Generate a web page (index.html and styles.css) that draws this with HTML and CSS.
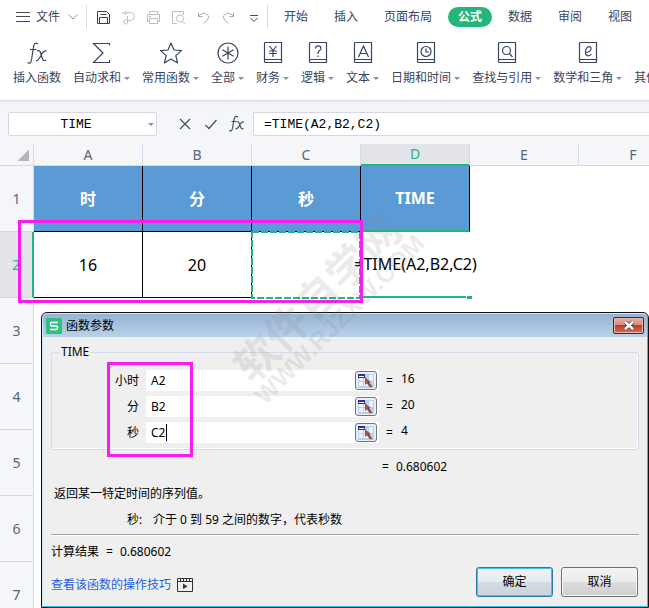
FILE: index.html
```html
<!DOCTYPE html>
<html lang="zh-CN">
<head>
<meta charset="UTF-8">
<meta name="viewport" content="width=device-width, initial-scale=1.0">
<title>TIME 函数</title>
<link rel="stylesheet" href="styles.css">
</head>
<body>
    <header class="ribbon">
        <nav class="menu">
            <button class="file-btn">
                <svg width="14" height="12" viewBox="0 0 14 12"><path d="M0 1.5h14M0 5.5h14M0 10.5h14" stroke="#444a58"/></svg>
                <span>文件</span>
                <svg class="file-arrow" width="10" height="6" viewBox="0 0 10 6"><path d="M.5.5L5 5 9.500.5" fill="none" stroke="#8a8f9a"/></svg>
            </button>
            <div class="quick">
                <button aria-label="保存"><svg width="15" height="15" viewBox="0 0 15 15"><path d="M1.500 1.500h9l3 3v9h-12zM3.500 13.500v-6h8v6M4.500 4.500h6" fill="none" stroke="#3b3f4a"/></svg></button>
                <button aria-label="输出"><svg width="15" height="15" viewBox="0 0 15 15"><path d="M1 3h5M4 1l2 2-2 2M6 2.500h3.500a4 4 0 010 8H6M6.500 6v6a2 2 0 11-2-2h2" fill="none" stroke="#bcbec4"/></svg></button>
                <button aria-label="打印"><svg width="15" height="15" viewBox="0 0 15 15"><path d="M3.500 4V1.500h8V4M3.500 11.500h-2v-7h12v7h-2M3.500 8.500h8v5h-8zM3 6.500h2" fill="none" stroke="#bcbec4"/></svg></button>
                <button aria-label="打印预览"><svg width="15" height="15" viewBox="0 0 15 15"><path d="M6 13.500H1.500v-12h11V5M11.500 11.500l3 2.500" fill="none" stroke="#bcbec4"/><circle cx="9" cy="8.500" r="3.500" fill="none" stroke="#bcbec4"/></svg></button>
                <button aria-label="撤销"><svg width="15" height="15" viewBox="0 0 15 15"><path d="M2.500 2.500v4h4M2.500 6.500C6 1.500 12 3 12.500 7c0 3-3 4-5 6.500" fill="none" stroke="#a9abb2"/></svg></button>
                <button aria-label="恢复"><svg width="15" height="15" viewBox="0 0 15 15"><path d="M12.500 2.500v4h-4M12.500 6.500C9 1.500 3 3 2.500 7c0 3 3 4 5 6.500" fill="none" stroke="#a9abb2"/></svg></button>
                <button aria-label="更多"><svg width="15" height="15" viewBox="0 0 15 15"><path d="M4 5.500h8M4.500 8L8 11.500 11.500 8" fill="none" stroke="#444a58"/></svg></button>
            </div>
            <div class="tabs">
                <button>开始</button>
                <button>插入</button>
                <button>页面布局</button>
                <button class="active">公式</button>
                <button>数据</button>
                <button>审阅</button>
                <button>视图</button>
            </div>
        </nav>
        <div class="tools">
            <button class="tool">
                <svg width="24" height="24" viewBox="0 0 24 24"><path d="M13 3c-3-2-4 0-4.500 3L6.500 19c-.4 3-2 4-4 2.500M5 8.500h6.500M12 10c3-1.500 3.500 1 4.500 5s2 5.500 4.500 4M21.500 10c-3-1-4 2-5.500 4.500S13 20.500 11 19.500" fill="none" stroke="#39445e" stroke-width="1.200"/></svg>
                <span>插入函数</span>
            </button>
            <button class="tool">
                <svg width="24" height="24" viewBox="0 0 24 24"><path d="M19.500 4.500V2.500H3.500L13 12 3.500 21.500h16v-2.500" fill="none" stroke="#39445e" stroke-width="1.200"/></svg>
                <span class="drop">自动求和</span>
            </button>
            <button class="tool">
                <svg width="24" height="24" viewBox="0 0 24 24"><path d="M12 2l3 7 7.500.6-5.700 5 1.800 7.400-6.600-4-6.600 4 1.800-7.400-5.700-5L9 9z" fill="none" stroke="#39445e" stroke-width="1.200" stroke-linejoin="round"/></svg>
                <span class="drop">常用函数</span>
            </button>
            <button class="tool">
                <svg width="24" height="24" viewBox="0 0 24 24"><circle cx="12" cy="12" r="10" fill="none" stroke="#39445e" stroke-width="1.200"/><path d="M12 5.500v13M6.400 8.700l11.200 6.600M17.600 8.700L6.400 15.300" stroke="#39445e" stroke-width="1.200"/></svg>
                <span class="drop">全部</span>
            </button>
            <button class="tool">
                <svg width="24" height="24" viewBox="0 0 24 24"><path d="M4.500 1.500h16v20h-16a1 1 0 01-1-1v-18a1 1 0 011-1zM4 18.500h16.500M8.500 5l3.500 4.500L15.500 5M12 9.500V16M8 10h8M8 12.500h8" fill="none" stroke="#39445e" stroke-width="1.200"/></svg>
                <span class="drop">财务</span>
            </button>
            <button class="tool">
                <svg width="24" height="24" viewBox="0 0 24 24"><path d="M4.500 1.500h16v20h-16a1 1 0 01-1-1v-18a1 1 0 011-1zM4 18.500h16.500M9.500 7.500C9.500 4 15 4 15 7.500c0 2-3 2-3 4.500v1M12 14.500V16" fill="none" stroke="#39445e" stroke-width="1.200"/></svg>
                <span class="drop">逻辑</span>
            </button>
            <button class="tool">
                <svg width="24" height="24" viewBox="0 0 24 24"><path d="M4.500 1.500h16v20h-16a1 1 0 01-1-1v-18a1 1 0 011-1zM4 18.500h16.500M7.500 16L12.500 5l5 11M9.500 12.500h6" fill="none" stroke="#39445e" stroke-width="1.200"/></svg>
                <span class="drop">文本</span>
            </button>
            <button class="tool">
                <svg width="24" height="24" viewBox="0 0 24 24"><path d="M4.500 1.500h16v20h-16a1 1 0 01-1-1v-18a1 1 0 011-1zM4 18.500h16.500M12 7.500v3.500h3" fill="none" stroke="#39445e" stroke-width="1.200"/><circle cx="12" cy="10.500" r="5" fill="none" stroke="#39445e" stroke-width="1.200"/></svg>
                <span class="drop">日期和时间</span>
            </button>
            <button class="tool">
                <svg width="24" height="24" viewBox="0 0 24 24"><path d="M4.500 1.500h16v20h-16a1 1 0 01-1-1v-18a1 1 0 011-1zM4 18.500h16.500M14.500 12.500l3 3.500" fill="none" stroke="#39445e" stroke-width="1.200"/><circle cx="11.500" cy="9.500" r="4" fill="none" stroke="#39445e" stroke-width="1.200"/></svg>
                <span class="drop">查找与引用</span>
            </button>
            <button class="tool">
                <svg width="24" height="24" viewBox="0 0 24 24"><path d="M4.500 1.500h16v20h-16a1 1 0 01-1-1v-18a1 1 0 011-1zM4 18.500h16.500M9 11.500c4 0 6.500-2 6-4.500-.6-2.500-5-1.500-5.500 3-.5 6 4 5.500 6 3" fill="none" stroke="#39445e" stroke-width="1.200"/></svg>
                <span class="drop">数学和三角</span>
            </button>
            <button class="tool">
                <svg width="24" height="24" viewBox="0 0 24 24"></svg>
                <span class="drop">其他函数</span>
            </button>
        </div>
    </header>

    <div class="formula-bar">
        <div class="name-box">
            <input type="text" value="TIME" aria-label="名称框">
            <button class="name-arrow" aria-label="展开"></button>
        </div>
        <div class="formula-btns">
            <button aria-label="取消输入"><svg width="12" height="12" viewBox="0 0 12 12"><path d="M1 1l10 10M11 1L1 11" stroke="#444f66" stroke-width="1.200"/></svg></button>
            <button aria-label="输入"><svg width="12" height="12" viewBox="0 0 12 12"><path d="M.5 7L4 10.500 11.500 2" fill="none" stroke="#444f66" stroke-width="1.200"/></svg></button>
            <button aria-label="插入函数"><svg width="17" height="18" viewBox="0 0 17 18"><path d="M9 2c-2.500-1.500-3.500 0-4 2.500L3.500 13c-.3 3-1.500 3.500-3.500 2.500M2.500 6.500h5M7.500 7c2.500-1 2.500 1 3.500 3.500s1.500 4 3.500 3M15 7c-2.500-1-3.500 2-4.500 3.500S8 14.500 6.500 13.500" fill="none" stroke="#444f66" stroke-width="1.200"/></svg></button>
        </div>
        <input class="formula-input" type="text" value="=TIME(A2,B2,C2)" aria-label="编辑栏">
    </div>

    <main class="sheet">
        <table class="grid">
            <colgroup><col class="col-num"><col><col><col><col><col><col></colgroup>
            <thead>
                <tr>
                    <th class="corner"></th><th>A</th><th>B</th><th>C</th><th class="selected">D</th><th>E</th><th>F</th>
                </tr>
            </thead>
            <tbody>
                <tr>
                    <th>1</th>
                    <td class="title">时</td><td class="title">分</td><td class="title">秒</td><td class="title title-last">TIME</td><td></td><td></td>
                </tr>
                <tr>
                    <th class="selected">2</th>
                    <td class="value">16</td>
                    <td class="value">20</td>
                    <td class="picked"><svg class="ants" width="110" height="68" viewBox="0 0 110 68"><rect x="1" y="1" width="108" height="66" fill="none" stroke="#23b67b" stroke-width="2" stroke-dasharray="7 2"/></svg></td>
                    <td class="editing"><div class="edit-text">=TIME(A2,B2,C2)</div><span class="handle"></span></td>
                    <td></td><td></td>
                </tr>
                <tr><th>3</th><td></td><td></td><td></td><td></td><td></td><td></td></tr>
                <tr><th>4</th><td></td><td></td><td></td><td></td><td></td><td></td></tr>
                <tr><th>5</th><td></td><td></td><td></td><td></td><td></td><td></td></tr>
                <tr><th>6</th><td></td><td></td><td></td><td></td><td></td><td></td></tr>
                <tr><th>7</th><td></td><td></td><td></td><td></td><td></td><td></td></tr>
            </tbody>
        </table>
        <div class="mark mark-cells"></div>
    </main>

    <!-- 函数参数 窗口 -->
    <form class="dialog">
        <div class="dialog-title">
            <svg width="16" height="16" viewBox="0 0 16 16"><rect width="16" height="16" rx="1" fill="#2fbf83"/><path d="M12 4.500H5.500a1 1 0 00-1 1v1.500a1 1 0 001 1h5a1 1 0 011 1v1.500a1 1 0 01-1 1H4" fill="none" stroke="#fff" stroke-width="1.300"/></svg>
            <span>函数参数</span>
            <button type="button" class="close" aria-label="关闭"><svg width="12" height="9" viewBox="0 0 12 9"><path d="M2 1l8 7M10 1L2 8" stroke="#4a4e5c" stroke-width="4"/><path d="M2 .8l8 7.400M10 .8L2 8.200" stroke="#fff" stroke-width="2.400"/></svg></button>
        </div>
        <div class="dialog-body">
            <fieldset>
                <legend>TIME</legend>
                <label for="hour">小时</label>
                <div class="field"><input id="hour" type="text" value="A2"><button type="button" class="pick" aria-label="选择区域"><svg width="16" height="14" viewBox="0 0 16 14"><path d="M0 0h16v14H0z" fill="#b8cff5"/><path d="M1 4h4v3H1zM6 4h4v3H6zM1 8h4v4H1zM6 8h4v4H6zM11 1h4v6h-4z" fill="#eef4ff"/><path d="M0 0h7v4H0z" fill="#2c3192"/><path d="M1 2h5v1H1z" fill="#fff"/><path d="M7 3v8l2-1.500 3 4 1.500-1L11 8.500l2-.5z" fill="#a5553c"/><path d="M10 8l4 5" stroke="#4b3a4a"/></svg></button></div>
                <span>=</span><output for="hour">16</output>

                <label for="minute">分</label>
                <div class="field"><input id="minute" type="text" value="B2"><button type="button" class="pick" aria-label="选择区域"><svg width="16" height="14" viewBox="0 0 16 14"><path d="M0 0h16v14H0z" fill="#b8cff5"/><path d="M1 4h4v3H1zM6 4h4v3H6zM1 8h4v4H1zM6 8h4v4H6zM11 1h4v6h-4z" fill="#eef4ff"/><path d="M0 0h7v4H0z" fill="#2c3192"/><path d="M1 2h5v1H1z" fill="#fff"/><path d="M7 3v8l2-1.500 3 4 1.500-1L11 8.500l2-.5z" fill="#a5553c"/><path d="M10 8l4 5" stroke="#4b3a4a"/></svg></button></div>
                <span>=</span><output for="minute">20</output>

                <label for="second">秒</label>
                <div class="field"><input id="second" type="text" value="C2"><i class="cursor"></i><button type="button" class="pick" aria-label="选择区域"><svg width="16" height="14" viewBox="0 0 16 14"><path d="M0 0h16v14H0z" fill="#b8cff5"/><path d="M1 4h4v3H1zM6 4h4v3H6zM1 8h4v4H1zM6 8h4v4H6zM11 1h4v6h-4z" fill="#eef4ff"/><path d="M0 0h7v4H0z" fill="#2c3192"/><path d="M1 2h5v1H1z" fill="#fff"/><path d="M7 3v8l2-1.500 3 4 1.500-1L11 8.500l2-.5z" fill="#a5553c"/><path d="M10 8l4 5" stroke="#4b3a4a"/></svg></button></div>
                <span>=</span><output for="second">4</output>
            </fieldset>
            <div class="total"><span>=</span><span>0.680602</span></div>
            <p class="desc">返回某一特定时间的序列值。</p>
            <p class="param"><span class="param-name">秒:</span><span>介于 0 到 59 之间的数字，代表秒数</span></p>
            <div class="result"><span>计算结果</span><span>=</span><span>0.680602</span></div>
            <div class="dialog-foot">
                <a href="#">查看该函数的操作技巧</a>
                <svg width="16" height="16" viewBox="0 0 16 16"><path d="M.5 1.500h15v13H.5zM.5 4.500h15M3.500 1.500v3M6.500 1.500v3M9.500 1.500v3M12.500 1.500v3" fill="none" stroke="#333"/><path d="M6 6.500l4.500 3L6 12z" fill="#333"/></svg>
                <div class="btns">
                    <button type="button" class="btn ok">确定</button>
                    <button type="button" class="btn">取消</button>
                </div>
            </div>
        </div>
        <div class="mark mark-args"></div>
    </form>

    <div class="watermark">
        <div class="wm-name">软件自学网</div>
        <div class="wm-url">WWW.RJZXW.COM</div>
    </div>
</body>
</html>
```
FILE: styles.css
```css
*{
    box-sizing:border-box;
}
body{
    margin:0;
    height:100vh;
    overflow:hidden;
    position:relative;
    background:#fff;
    color:#000;
    font-family:"Noto Sans", "Noto Sans CJK SC", sans-serif;
    font-size:12px;
    line-height:16px;
}
button, input{
    font:inherit;
    color:inherit;
    margin:0;
    padding:0;
    border:0;
    background:none;
    white-space:nowrap;
}
svg{
    display:block;
    flex:none;
}

/* 菜单 */
.ribbon{
    height:101px;
    overflow:hidden;
    color:#39445e;
    border-bottom:1px solid #dcdde2;
}
.menu{
    display:flex;
    align-items:center;
    height:34px;
    padding-left:16px;
}
.file-btn{
    display:flex;
    align-items:center;
    gap:6px;
    padding-right:8px;
}
.file-arrow{
    margin-left:2px;
}
.quick{
    display:flex;
    align-items:center;
    gap:10px;
    height:24px;
    width:182px;
    padding-left:9px;
    border-left:1px solid #dcdde4;
    border-right:1px solid #dcdde4;
    flex:none;
}
.tabs{
    display:flex;
    gap:6px;
    padding-left:6px;
}
.tabs button{
    height:20px;
    padding:0 10px;
    border-radius:10px;
}
.tabs .active{
    background:#23b67b;
    color:#fff;
    font-weight:bold;
}
.tools{
    display:flex;
    gap:12px;
    padding:7px 0 0 13px;
}
.tool{
    flex:none;
    display:flex;
    flex-direction:column;
    align-items:center;
    gap:5px;
}
.drop{
    display:flex;
    align-items:center;
    gap:3px;
}
.drop::after{
    content:"";
    border:3px solid transparent;
    border-top-color:#8790a8;
    border-bottom:0;
}

/* 编辑栏 */
.formula-bar{
    display:flex;
    height:43px;
    padding-top:11px;
    padding-left:8px;
    background:linear-gradient(#e8e9ec, #f5f6f9 4px);
    font-family:"Liberation Mono", monospace;
    font-size:13px;
}
.name-box{
    display:flex;
    align-items:center;
    width:149px;
    height:24px;
    flex:none;
    background:#fff;
    border:1px solid #d5d8e0;
    border-radius:2px;
}
.name-box input{
    width:134px;
    padding-top:2px;
    text-align:center;
}
.name-arrow{
    margin-left:5px;
    border:3px solid transparent;
    border-top-color:#8790a8;
    border-bottom:0;
}
.formula-btns{
    display:flex;
    align-items:center;
    gap:14px;
    height:24px;
    width:96px;
    padding-left:22px;
    flex:none;
}
.formula-btns button:last-child{
    margin-left:-2px;
}
.formula-input{
    flex:1;
    min-width:0;
    height:24px;
    padding-left:10px;
    background:#fff;
    border:1px solid #d5d8e0;
    border-right:0;
    border-radius:2px 0 0 2px;
}

/* 表格 */
.sheet{
    position:relative;
    overflow:hidden;
}
.grid{
    width:688px;
    table-layout:fixed;
    border-collapse:separate;
    border-spacing:0;
}
.grid th, .grid td{
    padding:0;
    text-align:center;
    vertical-align:middle;
    width:109px;
}
.grid .col-num, .grid th:first-child{
    width:34px;
}
.grid th{
    background:#f5f6f9;
    color:#58647c;
    font-size:14px;
    font-weight:normal;
    border-right:1px solid #d3d9e8;
    border-bottom:1px solid #d3d9e8;
}
.grid thead th{
    height:22px;
}
.grid tbody th{
    height:66px;
}
.grid th.selected{
    background:#e3e4ea;
    color:#23b67b;
}
.grid thead .selected{
    border-bottom:2px solid #23b67b;
}
.grid tbody .selected{
    border-right:2px solid #23b67b;
}
.grid thead .corner{
    background:linear-gradient(135deg, transparent 50%, #b5b6ba 50%) 18px 6px / 11px 11px no-repeat #f5f6f9;
}
.grid .title{
    background:#5a9bd6;
    color:#fff;
    font-size:16px;
    font-weight:bold;
    border-right:1px solid #000;
    border-bottom:1px solid #000;
}
.grid .title-last{
    border-bottom:2px solid #23b67b;
}
.grid .value{
    font-size:16px;
    border-right:1px solid #000;
    border-bottom:1px solid #000;
}
.picked, .editing{
    position:relative;
}
.ants{
    position:absolute;
    left:-1px;
    top:-1px;
}
.editing{
    font-size:16px;
}
.edit-text{
    display:flex;
    justify-content:center;
    align-items:center;
    height:66px;
    white-space:nowrap;
    border-bottom:2px solid #23b67b;
}
.handle{
    position:absolute;
    right:-2px;
    bottom:-1px;
    width:6px;
    height:4px;
    background:#23b67b;
    border-left:1px solid #fff;
    border-top:1px solid #fff;
}
.mark{
    position:absolute;
    border:3px solid #f81cf0;
}
.mark-cells{
    left:18px;
    top:76px;
    width:345px;
    height:83px;
}

/* 函数参数 */
.dialog{
    position:absolute;
    left:41px;
    right:0;
    top:312px;
    height:296px;
    padding:1px;
    border:1px solid #111;
    border-radius:6px 6px 0 0;
    background:#efefef;
    box-shadow:inset 1px 1px #d5e5f5, inset -1px -1px #35bfe0;
}
.dialog-title{
    display:flex;
    align-items:center;
    gap:4px;
    height:23px;
    padding:0 3px;
    background:linear-gradient(#98b4d3, #b9d1ea);
    border-radius:4px 4px 0 0;
}
.close{
    display:flex;
    align-items:center;
    justify-content:center;
    width:31px;
    height:17px;
    margin-left:auto;
    border:1px solid #5a1a22;
    border-radius:2px;
    background:linear-gradient(#e8aca2, #d98878 50%, #bb3f28 50%, #d0705a);
    box-shadow:inset 0 0 0 1px #eab5ac;
}
.dialog-body{
    padding:7px 8px 0;
}
fieldset{
    display:grid;
    grid-template-columns:87px minmax(0, 233px) 7px 1fr;
    column-gap:7px;
    row-gap:5px;
    align-items:center;
    margin:0;
    padding:10px 0 6px;
    border:1px solid #d3dbe6;
    border-radius:3px;
    box-shadow:inset -1px -1px #fff;
}
legend{
    margin-left:7px;
    padding:0 2px;
}
fieldset label{
    text-align:right;
}
.field{
    position:relative;
    display:flex;
    align-items:center;
    height:21px;
    padding-right:2px;
    background:#fff;
}
.field input{
    flex:1;
    min-width:0;
    padding-left:5px;
    outline:0;
}
.pick{
    display:flex;
    align-items:center;
    justify-content:center;
    width:22px;
    height:19px;
    border:1px solid #70747a;
    border-radius:3px;
    background:#eceef2;
}
.cursor{
    position:absolute;
    left:20px;
    top:2px;
    width:1px;
    height:17px;
    background:#000;
}
fieldset output{
    padding:0 0 4px 1px;
}
.total{
    display:flex;
    gap:7px;
    margin-top:9px;
    padding-left:331px;
}
p{
    margin:0;
}
.desc{
    margin-top:11px;
    padding-left:3px;
}
.param{
    display:flex;
    margin-top:10px;
    padding:0 0 6px 76px;
    border-bottom:1px solid #a0a0a0;
    box-shadow:0 1px #fff;
}
.param-name{
    width:26px;
}
.result{
    display:flex;
    gap:7px;
    margin-top:9px;
}
.dialog-foot{
    display:flex;
    align-items:center;
    margin-top:7px;
}
.dialog-foot a{
    margin-right:6px;
    padding-top:6px;
    color:#1f5fe0;
    text-decoration:none;
}
.dialog-foot svg{
    margin-top:6px;
}
.btns{
    display:flex;
    gap:8px;
    margin-left:auto;
    padding-right:1px;
}
.btn{
    width:77px;
    height:30px;
    border:1px solid #707070;
    border-radius:3px;
    background:linear-gradient(#f3f3f3, #ebebeb 50%, #dcdcdc 50%, #cfcfcf);
    box-shadow:inset 0 0 0 1px #f8f8f8;
}
.ok{
    border-color:#2c7aa8;
    background:linear-gradient(#eff3f5, #e4eaee 50%, #d3dce2 50%, #c9d3da);
    box-shadow:inset 0 0 0 1px #3ec3ee;
}
.mark-args{
    left:65px;
    top:49px;
    width:86px;
    height:95px;
}

/* 水印 */
.watermark{
    position:absolute;
    left:205px;
    top:274px;
    width:240px;
    text-align:center;
    color:rgba(130, 130, 130, 0.16);
    font-weight:bold;
    white-space:nowrap;
    transform:rotate(-45deg);
    pointer-events:none;
}
.wm-name{
    font-size:43px;
    line-height:40px;
}
.wm-url{
    font-family:"Liberation Sans", sans-serif;
    font-size:25px;
    line-height:22px;
}
```
